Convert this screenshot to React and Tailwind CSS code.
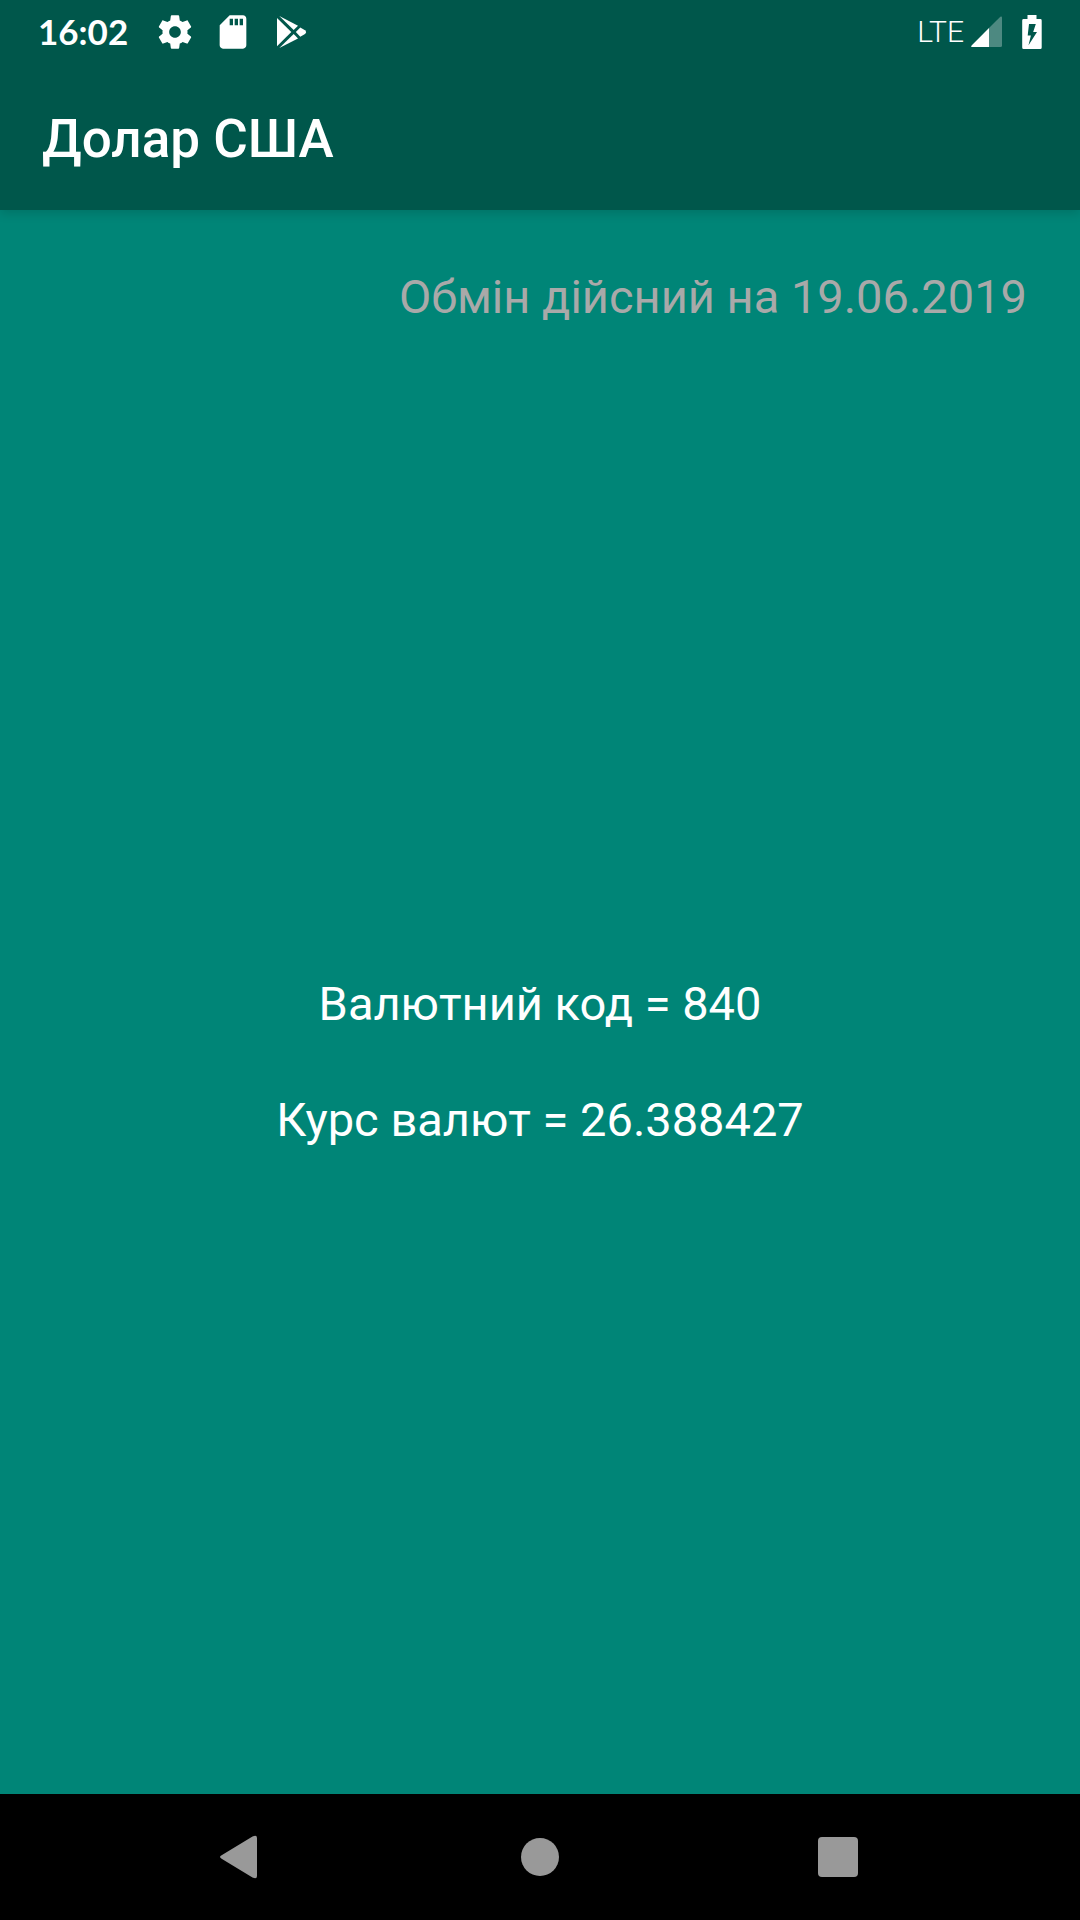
function GearIcon() {
  return (
    <svg className="size-10" viewBox="0 0 24 24" fill="currentColor" aria-hidden="true">
      <path d="M19.43 12.98c.04-.32.07-.64.07-.98s-.03-.66-.07-.98l2.11-1.65c.19-.15.24-.42.12-.64l-2-3.46c-.12-.22-.39-.3-.61-.22l-2.49 1c-.52-.4-1.08-.73-1.69-.98l-.38-2.65C14.46 2.18 14.25 2 14 2h-4c-.25 0-.46.18-.49.42l-.38 2.65c-.61.25-1.17.59-1.69.98l-2.49-1c-.23-.09-.49 0-.61.22l-2 3.46c-.13.22-.07.49.12.64l2.11 1.65c-.04.32-.07.65-.07.98s.03.66.07.98l-2.11 1.65c-.19.15-.24.42-.12.64l2 3.46c.12.22.39.3.61.22l2.49-1c.52.4 1.08.73 1.69.98l.38 2.65c.03.24.24.42.49.42h4c.25 0 .46-.18.49-.42l.38-2.65c.61-.25 1.17-.59 1.69-.98l2.49 1c.23.09.49 0 .61-.22l2-3.46c.12-.22.07-.49-.12-.64l-2.11-1.65zM12 15.5c-1.93 0-3.5-1.57-3.5-3.5s1.57-3.5 3.5-3.5 3.5 1.57 3.5 3.5-1.57 3.5-3.5 3.5z" />
    </svg>
  );
}

function SdCardIcon() {
  return (
    <svg className="size-10" viewBox="0 0 24 24" fill="currentColor" aria-hidden="true">
      <path d="M18 2h-8L4.02 8 4 20c0 1.1.9 2 2 2h12c1.1 0 2-.9 2-2V4c0-1.1-.9-2-2-2zm-6 6h-2V4h2v4zm3 0h-2V4h2v4zm3 0h-2V4h2v4z" />
    </svg>
  );
}

function PlayStoreIcon() {
  return (
    <svg className="size-10" viewBox="1 1.5 40 40" fill="currentColor" aria-hidden="true">
      <path d="M7 7.5 21.3 21.5 7 35.8z" />
      <path d="M9.3 5.6 28 15.3 23.7 19.6z" />
      <path d="M9.3 37.6 28 28 23.7 23.6z" />
      <path d="M25.8 21.6 30.3 17 35 19.7Q37.2 21.6 35 23.5L30.3 26.2z" />
    </svg>
  );
}

function SignalIcon() {
  return (
    <svg className="h-[31px] w-[31px]" viewBox="0 0 31 31" fill="currentColor" aria-hidden="true">
      <path fillOpacity="0.3" d="M18 12 29.3.7Q31 0 31 1.5V29.5Q31 31 29.5 31H18z" />
      <path d="M18 12V31H1.2Q-.5 31 .6 29.4z" />
    </svg>
  );
}

function BatteryIcon() {
  return (
    <svg className="h-[34px] w-5" viewBox="0 0 20 34" fill="currentColor" aria-hidden="true">
      <path
        fillRule="evenodd"
        d="M5.5 0h9v4H18.3Q19.7 4 19.7 5.4V32.4Q19.7 34 18.3 34H1.6Q.2 34 .2 32.4V5.4Q.2 4 1.6 4H5.5zM7 9 5.7 20.5H8.9L6.5 30.3 15 17H11.2L13.8 9z"
      />
    </svg>
  );
}

function StatusBar() {
  return (
    <div className="flex h-[63px] items-center justify-between px-[38px] text-white">
      <div className="flex items-center gap-[18px]">
        <span className="mr-[9px] font-['Lato',sans-serif] text-[35px] leading-none font-bold">16:02</span>
        <GearIcon />
        <SdCardIcon />
        <PlayStoreIcon />
      </div>
      <div className="flex items-center">
        <span className="mr-[7px] text-[30px] leading-none font-light">LTE</span>
        <SignalIcon />
        <span className="ml-5 flex">
          <BatteryIcon />
        </span>
      </div>
    </div>
  );
}

function NavBar() {
  const button = "flex h-full flex-1 items-center justify-center text-[#999999]";
  return (
    <nav className="flex h-[126px] items-center bg-black px-[93px]">
      <button type="button" aria-label="Назад" className={button}>
        <svg className="size-12" viewBox="0 0 48 48" fill="currentColor" aria-hidden="true">
          <path d="M3.6 22.3 34.5 3.6Q39 1.5 39 5V43Q39 46.5 34.5 44.4L3.6 25.7Q.5 24 3.6 22.3z" />
        </svg>
      </button>
      <button type="button" aria-label="Головна" className={button}>
        <svg className="size-12" viewBox="0 0 48 48" fill="currentColor" aria-hidden="true">
          <circle cx="24" cy="24" r="19" />
        </svg>
      </button>
      <button type="button" aria-label="Огляд" className={button}>
        <svg className="size-12" viewBox="0 0 48 48" fill="currentColor" aria-hidden="true">
          <rect x="4" y="4" width="40" height="40" rx="4" />
        </svg>
      </button>
    </nav>
  );
}

export default function App() {
  return (
    <div className="flex min-h-screen flex-col bg-[#008577] font-['Roboto',sans-serif]">
      <header className="bg-[#00574b] shadow-[0_3px_10px_rgba(0,0,0,0.15)]">
        <StatusBar />
        <div className="flex h-[147px] items-center px-[42px] pt-[6px]">
          <h1 className="text-[53px] leading-none font-medium text-white">Долар США</h1>
        </div>
      </header>
      <main className="grid grow grid-rows-[1fr_auto_1fr] px-[53px] text-[47px] leading-[56px] text-white">
        <p className="pt-[59px] text-right text-[#a9a9a9]">Обмін дійсний на 19.06.2019</p>
        <p className="pt-1 text-center">Валютний код = 840</p>
        <p className="pt-[60px] text-center">Курс валют = 26.388427</p>
      </main>
      <NavBar />
    </div>
  );
}
